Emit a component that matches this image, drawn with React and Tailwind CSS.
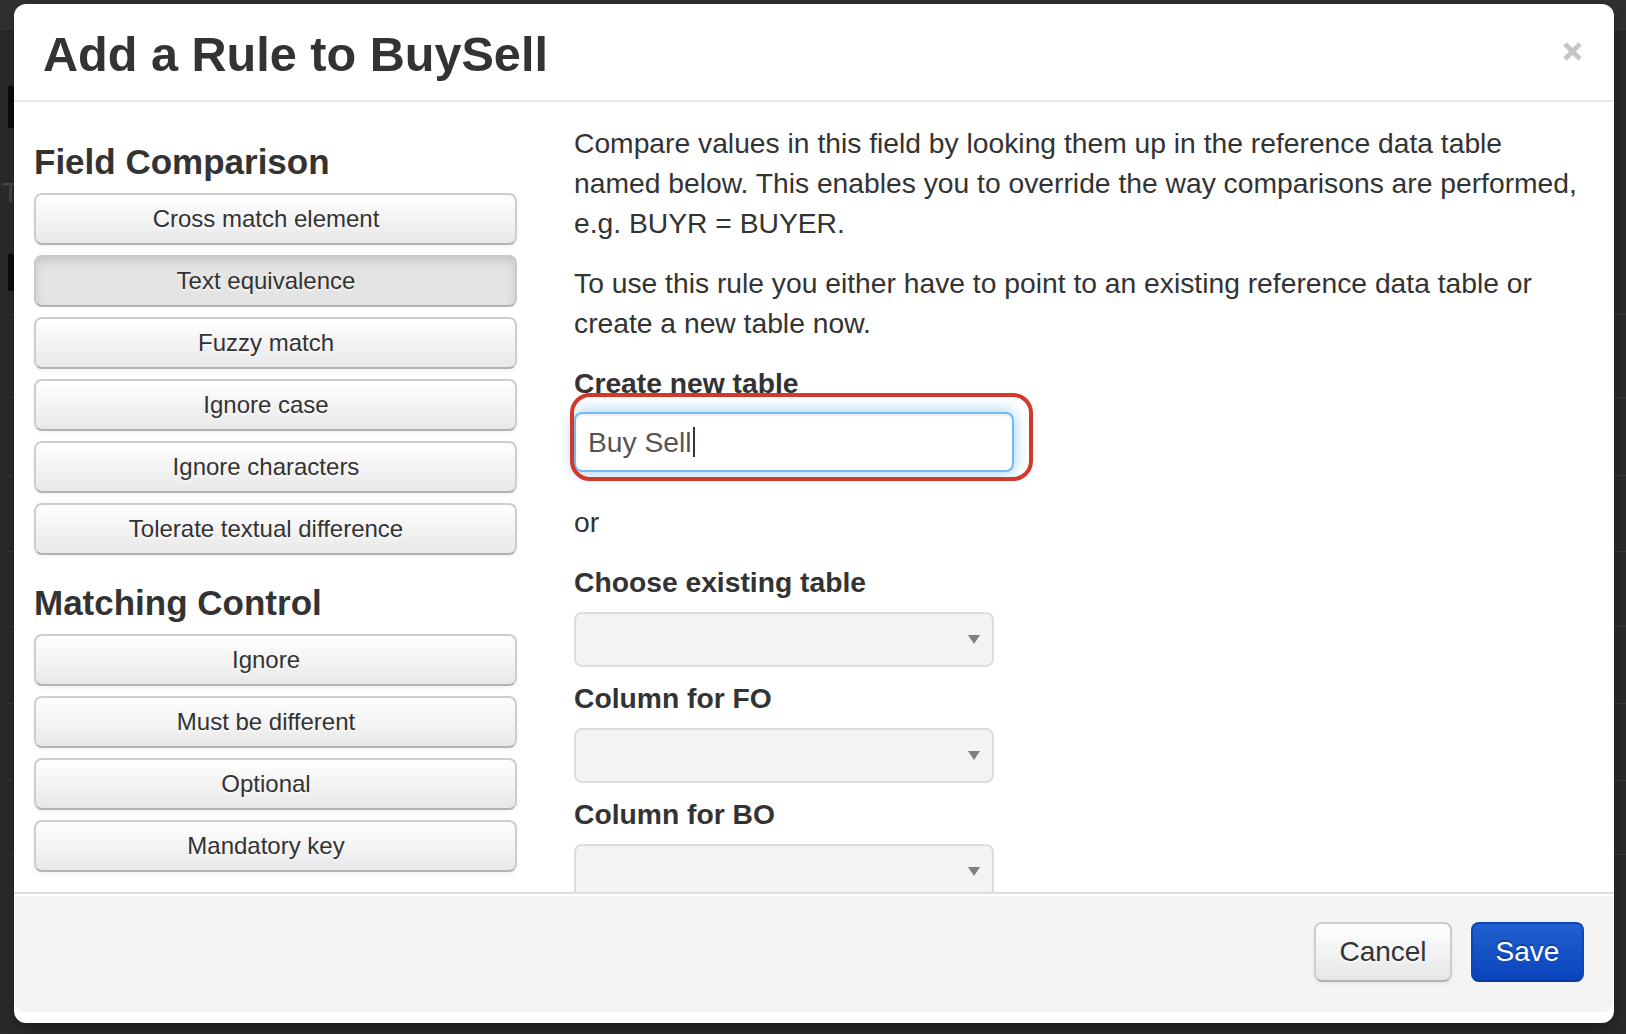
import React from 'react'

const fieldComparison = [
  { label: 'Cross match element' },
  { label: 'Text equivalence', active: true },
  { label: 'Fuzzy match' },
  { label: 'Ignore case' },
  { label: 'Ignore characters' },
  { label: 'Tolerate textual difference' },
]

const matchingControl = ['Ignore', 'Must be different', 'Optional', 'Mandatory key']

// rows of the page behind the backdrop
const pageRows = [24, 83, 78, 76, 75, 77, 77, 74]

function RuleButton({ label, active }) {
  return (
    <button
      className={`flex h-[52px] w-full items-center justify-center rounded-[8px] border-2 pr-[19px] text-[24px] text-[#333] [text-shadow:0_2px_2px_rgba(255,255,255,0.75)] ${
        active
          ? 'border-[#c8c8c8] border-b-[#b3b3b3] bg-[#e4e4e4] shadow-[inset_0_4px_8px_rgba(0,0,0,0.13)]'
          : 'border-[#cdcdcd] border-b-[#b3b3b3] bg-gradient-to-b from-white to-[#e8e8e8] shadow-[0_2px_4px_rgba(0,0,0,0.05)]'
      }`}
    >
      {label}
    </button>
  )
}

function SelectBox() {
  return (
    <div className="flex h-[55px] w-[420px] shrink-0 items-center justify-end rounded-[8px] border-2 border-[#dcdcdc] bg-[#f3f3f3] pr-[12px]">
      <svg width="12" height="9" viewBox="0 0 12 9">
        <path d="M0 0h12L6 9z" fill="#808080" />
      </svg>
    </div>
  )
}

export default function App() {
  return (
    <div className="relative h-[1034px] w-[1626px] overflow-hidden bg-[#2a2a2a] font-['Liberation_Sans',Arial,sans-serif]">
      {/* page behind the backdrop */}
      <div className="h-[30px] border-b-2 border-[#333] bg-[#303030]" />
      <div className="pl-[8px]">
        <div className="mt-[56px] h-[42px] w-[60px] bg-[#0b0b0b]" />
        <div className="-ml-[6px] mt-[50px] text-[28px] leading-[30px] text-[#4a4a4a]">T</div>
        <div className="mt-[46px] h-[37px] w-[60px] bg-[#0b0b0b]" />
        {pageRows.map((h, i) => (
          <div key={i} className="border-b border-[#3a3a3a]" style={{ height: h }} />
        ))}
      </div>

      {/* modal */}
      <div className="absolute left-[14px] top-[4px] flex h-[1019px] w-[1600px] flex-col rounded-[12px] bg-white pb-[11px] shadow-[0_6px_14px_rgba(0,0,0,0.3)]">
        {/* header */}
        <div className="flex h-[98px] shrink-0 items-start justify-between border-b-2 border-[#e8e8e8] pl-[29px] pr-[32px]">
          <h3 className="mt-[20px] text-[48.6px] font-bold leading-[60px] text-[#333]">Add a Rule to BuySell</h3>
          <svg className="mt-[38px]" width="19" height="19" viewBox="0 0 19 19">
            <path d="M2 2L17 17M17 2L2 17" stroke="#c6c6c6" strokeWidth="4.6" />
          </svg>
        </div>

        {/* body */}
        <div className="flex h-[790px] shrink-0 overflow-hidden">
          <div className="ml-[20px] flex w-[483px] shrink-0 flex-col pt-[40px]">
            <h4 className="mb-[11px] text-[35px] font-bold leading-[40px] text-[#333]">Field Comparison</h4>
            <div className="flex flex-col gap-[10px]">
              {fieldComparison.map((b) => (
                <RuleButton key={b.label} label={b.label} active={b.active} />
              ))}
            </div>
            <h4 className="mb-[11px] mt-[28px] text-[35px] font-bold leading-[40px] text-[#333]">Matching Control</h4>
            <div className="flex flex-col gap-[10px]">
              {matchingControl.map((label) => (
                <RuleButton key={label} label={label} />
              ))}
            </div>
          </div>

          <div className="ml-[57px] flex flex-1 flex-col pr-[30px] pt-[21px] text-[28.25px] leading-[40px] text-[#333]">
            <p className="mb-[20px] whitespace-nowrap">
              Compare values in this field by looking them up in the reference data table
              <br />
              named below. This enables you to override the way comparisons are performed,
              <br />
              e.g. BUYR = BUYER.
            </p>
            <p className="mb-[20px] whitespace-nowrap">
              To use this rule you either have to point to an existing reference data table or
              <br />
              create a new table now.
            </p>

            <label className="mb-[9px] font-bold">Create new table</label>
            <div className="relative mb-[30px] w-[440px]">
              <div className="flex h-[60px] w-[440px] items-center rounded-[8px] border-2 border-[rgba(82,168,236,0.8)] bg-white pl-[12px] text-[#555] shadow-[inset_0_2px_2px_rgba(0,0,0,0.075),0_0_16px_rgba(82,168,236,0.6)]">
                <span>Buy Sell</span>
                <span className="ml-[1px] h-[30px] w-[2px] bg-[#333]" />
              </div>
              {/* annotation highlight */}
              <div className="pointer-events-none absolute -left-[4px] -top-[19px] h-[88px] w-[463px] rounded-[20px] border-4 border-[#d1392a]" />
            </div>

            <p className="mb-[20px]">or</p>

            <label className="mb-[10px] font-bold">Choose existing table</label>
            <SelectBox />
            <label className="mb-[10px] mt-[11px] font-bold">Column for FO</label>
            <SelectBox />
            <label className="mb-[10px] mt-[11px] font-bold">Column for BO</label>
            <SelectBox />
          </div>
        </div>

        {/* footer */}
        <div className="flex h-[120px] shrink-0 items-start justify-end gap-[19px] rounded-b-[12px] border-t-2 border-[#dddddd] bg-[#f4f4f4] pr-[30px] pt-[28px] shadow-[inset_0_2px_0_#fff]">
          <button className="h-[60px] w-[138px] rounded-[8px] border-2 border-[#cdcdcd] border-b-[#b3b3b3] bg-gradient-to-b from-white to-[#e6e6e6] text-[28px] text-[#333] shadow-[0_2px_4px_rgba(0,0,0,0.05)] [text-shadow:0_2px_2px_rgba(255,255,255,0.75)]">
            Cancel
          </button>
          <button className="h-[60px] w-[113px] rounded-[8px] border-2 border-[#0b46bf] border-b-[#083a9e] bg-gradient-to-b from-[#2160ce] to-[#0a43bd] text-[28px] text-white [text-shadow:0_-2px_0_rgba(0,0,0,0.25)]">
            Save
          </button>
        </div>
      </div>
    </div>
  )
}
